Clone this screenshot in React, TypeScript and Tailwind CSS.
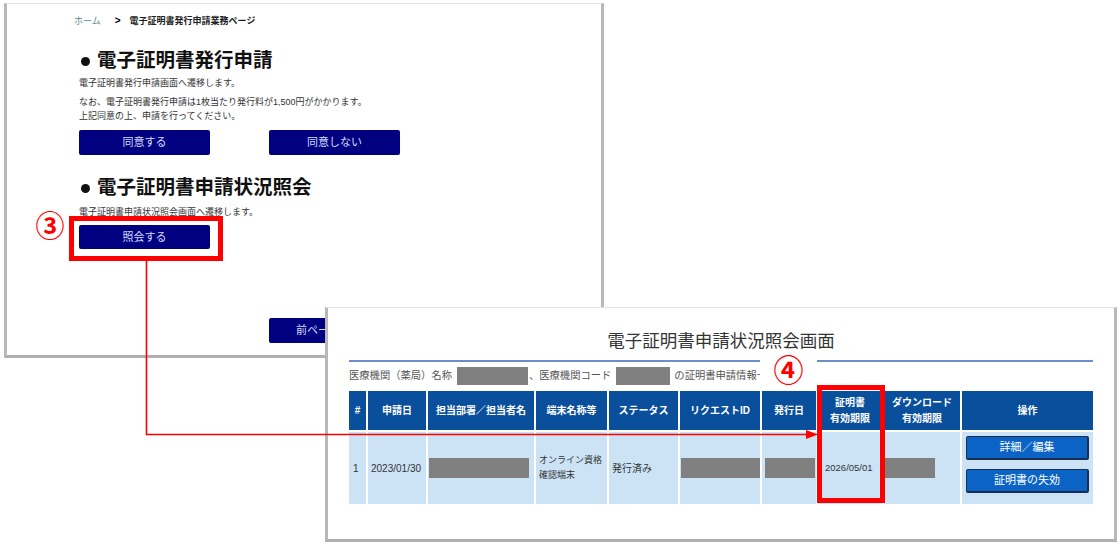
import React from "react";

const Gray = ({ w, h = 20 }: { w: number; h?: number }) => (
  <div className="bg-[#808080]" style={{ width: w, height: h }} />
);

export default function App() {
  const cols = "17px 58px 106px 71px 69px 80px 54px 64px 76px 131px";
  const headers: React.ReactNode[] = [
    "#",
    "申請日",
    "担当部署／担当者名",
    "端末名称等",
    "ステータス",
    "リクエストID",
    "発行日",
    <>
      証明書
      <br />
      有効期限
    </>,
    <>
      ダウンロード
      <br />
      有効期限
    </>,
    "操作",
  ];
  return (
    <div className="relative w-[1120px] h-[547px] bg-white overflow-hidden font-['Liberation_Sans','Noto_Sans_CJK_JP',sans-serif] text-[#222]">
      {/* Left window */}
      <div className="absolute left-[4px] top-[3px] w-[600px] h-[355px] bg-white border-l-[3px] border-r-[3px] border-b-[3px] border-t border-l-[#b8b8b8] border-r-[#b8b8b8] border-b-[#b0b0b0] border-t-[#e6e6e6]">
        <div className="flex flex-col pl-[67px]">
          <div className="mt-[10px] h-[14px] leading-[14px] flex items-center text-[9px]">
            <span className="text-[#4f8c8c]">ホーム</span>
            <span className="ml-[14px] font-bold text-[10px] text-black">&gt;</span>
            <span className="ml-[9px] font-bold text-[#222]">電子証明書発行申請業務ページ</span>
          </div>
          <div className="mt-[18px] h-[28px] leading-[28px] ml-[7px] flex items-center font-bold text-[19.5px] text-[#111]">
            <span className="w-[9px] h-[9px] rounded-full bg-[#111] mr-[7px] mt-[2px]" />
            <span>電子証明書発行申請</span>
          </div>
          <div className="pl-[5px] text-[9px] leading-[14px] text-[#333]">
            <div className="mt-[2px]">電子証明書発行申請画面へ遷移します。</div>
            <div className="mt-[5px]">なお、電子証明書発行申請は1枚当たり発行料が1,500円がかかります。</div>
            <div>上記同意の上、申請を行ってください。</div>
          </div>
          <div className="mt-[7px] ml-[5px] flex gap-[59px]">
            <div className="w-[131px] h-[25px] bg-[#000080] rounded-[2px] flex items-center justify-center text-[11px] text-[#d4dcff]">同意する</div>
            <div className="w-[131px] h-[25px] bg-[#000080] rounded-[2px] flex items-center justify-center text-[11px] text-[#d4dcff]">同意しない</div>
          </div>
          <div className="mt-[18px] h-[28px] leading-[28px] ml-[7px] flex items-center font-bold text-[19.5px] text-[#111]">
            <span className="w-[9px] h-[9px] rounded-full bg-[#111] mr-[7px] mt-[2px]" />
            <span>電子証明書申請状況照会</span>
          </div>
          <div className="pl-[5px] mt-[4px] text-[9px] leading-[14px] text-[#333]">電子証明書申請状況照会画面へ遷移します。</div>
          <div className="mt-[6px] ml-[5px] flex">
            <div className="w-[131px] h-[24px] bg-[#000080] rounded-[2px] flex items-center justify-center text-[11px] text-[#d4dcff]">照会する</div>
          </div>
          <div className="mt-[69px] ml-[195px] flex">
            <div className="w-[131px] h-[25px] bg-[#000080] rounded-[2px] flex items-center justify-center text-[11px] text-[#d4dcff]">前ページへ戻る</div>
          </div>
        </div>
      </div>

      {/* Right window */}
      <div className="absolute left-[325px] top-[307px] w-[792px] h-[235px] bg-white border-l-[3px] border-r-[3px] border-b-[3px] border-t border-l-[#b8b8b8] border-r-[#b8b8b8] border-b-[#b0b0b0] border-t-[#e6e6e6]">
        <div className="ml-[21px] w-[744px] flex flex-col">
          <div className="mt-[20px] h-[26px] leading-[26px] text-center text-[17.5px] text-[#333]">電子証明書申請状況照会画面</div>
          <div className="mt-[6px] h-[2px] bg-[#6d8fc9]" />
          <div className="mt-[5px] h-[18px] flex items-center text-[10.3px] text-[#555] whitespace-nowrap">
            <span>医療機関（薬局）名称</span>
            <div className="ml-[5px]"><Gray w={71} h={18} /></div>
            <span className="ml-[1px]">、医療機関コード</span>
            <div className="ml-[5px]"><Gray w={54} h={18} /></div>
            <span className="ml-[4px]">の証明書申請情報一覧</span>
          </div>
          <div className="mt-[6px] grid gap-[2px]" style={{ gridTemplateColumns: cols }}>
            {headers.map((h, i) => (
              <div key={i} className="h-[39px] bg-[#0a4f9c] flex items-center justify-center text-center text-[10px] leading-[16px] font-bold text-white whitespace-nowrap">
                {h}
              </div>
            ))}
            <div className="h-[72px] bg-[#cce3f6] flex items-center pl-[4px] text-[10px] text-[#333]">1</div>
            <div className="bg-[#cce3f6] flex items-center pl-[3px] text-[10px] text-[#333]">2023/01/30</div>
            <div className="bg-[#cce3f6] flex items-center pl-[1px]"><Gray w={100} /></div>
            <div className="bg-[#cce3f6] flex items-center pl-[3px] text-[9px] leading-[15px] text-[#333] whitespace-nowrap">オンライン資格<br />確認端末</div>
            <div className="bg-[#cce3f6] flex items-center pl-[3px] text-[10px] text-[#333]">発行済み</div>
            <div className="bg-[#cce3f6] flex items-center pl-[1px]"><Gray w={79} /></div>
            <div className="bg-[#cce3f6] flex items-center pl-[3px]"><Gray w={50} /></div>
            <div className="bg-[#cce3f6] flex items-center pl-[7px] text-[9.5px] text-[#333]">2026/05/01</div>
            <div className="bg-[#cce3f6] flex items-center pl-[1px]"><Gray w={50} /></div>
            <div className="bg-[#cce3f6] flex flex-col items-center pt-[4px] gap-[9px]">
              <div className="w-[123px] h-[24px] bg-[#0b63c5] rounded-[2px] border border-[#1b2d52] border-r-2 border-b-2 flex items-center justify-center text-[11px] text-white">詳細／編集</div>
              <div className="w-[123px] h-[24px] bg-[#0b63c5] rounded-[2px] border border-[#1b2d52] border-r-2 border-b-2 flex items-center justify-center text-[11px] text-white">証明書の失効</div>
            </div>
          </div>
        </div>
      </div>

      {/* Annotations */}
      <div className="absolute left-[69px] top-[216px] w-[154px] h-[45px] border-[5px] border-[#ff0000]" />
      <div className="absolute left-[34px] top-[211px] w-[32px] h-[32px] flex items-center justify-center text-[29px] font-bold leading-none text-[#ff0000]">③</div>
      <div className="absolute left-[760px] top-[355px] w-[57px] h-[32px] bg-white flex items-center justify-center text-[30px] font-bold leading-none text-[#ff0000]">④</div>
      <div className="absolute left-[817px] top-[385px] w-[68px] h-[118px] border-[5px] border-[#ff0000]" />
      <svg className="absolute left-0 top-0" width="1120" height="547" viewBox="0 0 1120 547">
        <polyline points="146.5,261 146.5,434.5 808,434.5" fill="none" stroke="#ff0000" strokeWidth="1.6" />
        <polygon points="806,430 818,434.5 806,439" fill="#ff0000" />
      </svg>
    </div>
  );
}
